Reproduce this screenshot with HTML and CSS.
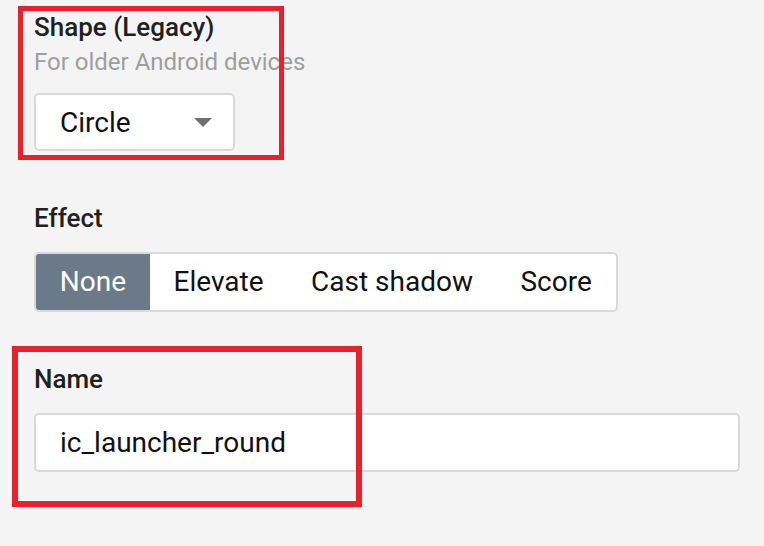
FILE: index.html
```html
<!DOCTYPE html>
<html lang="en">
<head>
<meta charset="utf-8">
<title>Launcher icon options</title>
<link rel="stylesheet" href="styles.css">
</head>
<body>
<main class="panel">
  <section class="field">
    <h3 class="label">Shape (Legacy)</h3>
    <p class="hint">For older Android devices</p>
    <div class="select">
      <span class="select-value">Circle</span>
      <span class="select-arrow"></span>
    </div>
  </section>

  <section class="field field-gap">
    <h3 class="label">Effect</h3>
    <div class="segmented">
      <span class="segment is-active">None</span>
      <span class="segment">Elevate</span>
      <span class="segment">Cast shadow</span>
      <span class="segment">Score</span>
    </div>
  </section>

  <section class="field field-gap">
    <h3 class="label">Name</h3>
    <div class="text-input">ic_launcher_round</div>
  </section>
</main>
<div class="annot annot-shape"></div>
<div class="annot annot-name"></div>
</body>
</html>
```

FILE: styles.css
```css
html, body {
  margin: 0;
  padding: 0;
}

body {
  position: relative;
  width: 764px;
  height: 546px;
  overflow: hidden;
  background: #f4f4f4;
  font-family: Roboto, "Liberation Sans", sans-serif;
  color: #212121;
}

.panel {
  padding: 12px 0 0 34px;
}

.field {
  display: flex;
  flex-direction: column;
  align-items: flex-start;
}

.field-gap {
  margin-top: 51.5px;
}

.label {
  margin: 0;
  font-size: 26px;
  font-weight: 500;
  line-height: 30px;
  color: #202020;
}

.hint {
  margin: 6px 0 0;
  font-size: 24px;
  line-height: 28px;
  color: #9e9e9e;
}

.select {
  margin-top: 17px;
  box-sizing: border-box;
  width: 201px;
  height: 58px;
  display: flex;
  align-items: center;
  padding: 0 21px 0 24px;
  background: #fff;
  border: 2px solid #d9d9d9;
  border-radius: 5px;
  font-size: 28px;
  color: #111;
}

.select-arrow {
  margin-left: auto;
  width: 0;
  height: 0;
  border-left: 9.5px solid transparent;
  border-right: 9.5px solid transparent;
  border-top: 9.5px solid #707070;
}

.segmented {
  margin-top: 19.5px;
  box-sizing: border-box;
  height: 60px;
  display: flex;
  background: #fff;
  border: 2px solid #d9d9d9;
  border-radius: 5px;
  overflow: hidden;
}

.segment {
  padding: 0 23.75px;
  font-size: 28px;
  line-height: 56px;
  color: #111;
}

.segment.is-active {
  background: #6a7a88;
  color: #fff;
}

.text-input {
  margin-top: 19.5px;
  box-sizing: border-box;
  width: 706px;
  height: 59px;
  display: flex;
  align-items: center;
  padding: 0 24px;
  background: #fff;
  border: 2px solid #d9d9d9;
  border-radius: 5px;
  font-size: 28px;
  color: #111;
}

.annot {
  position: absolute;
  box-sizing: border-box;
  border: 5px solid #e8212a;
  pointer-events: none;
}

.annot-shape {
  left: 18px;
  top: 6px;
  width: 266px;
  height: 154px;
}

.annot-name {
  left: 12px;
  top: 346px;
  width: 350px;
  height: 161px;
  border-width: 6px;
}
```
